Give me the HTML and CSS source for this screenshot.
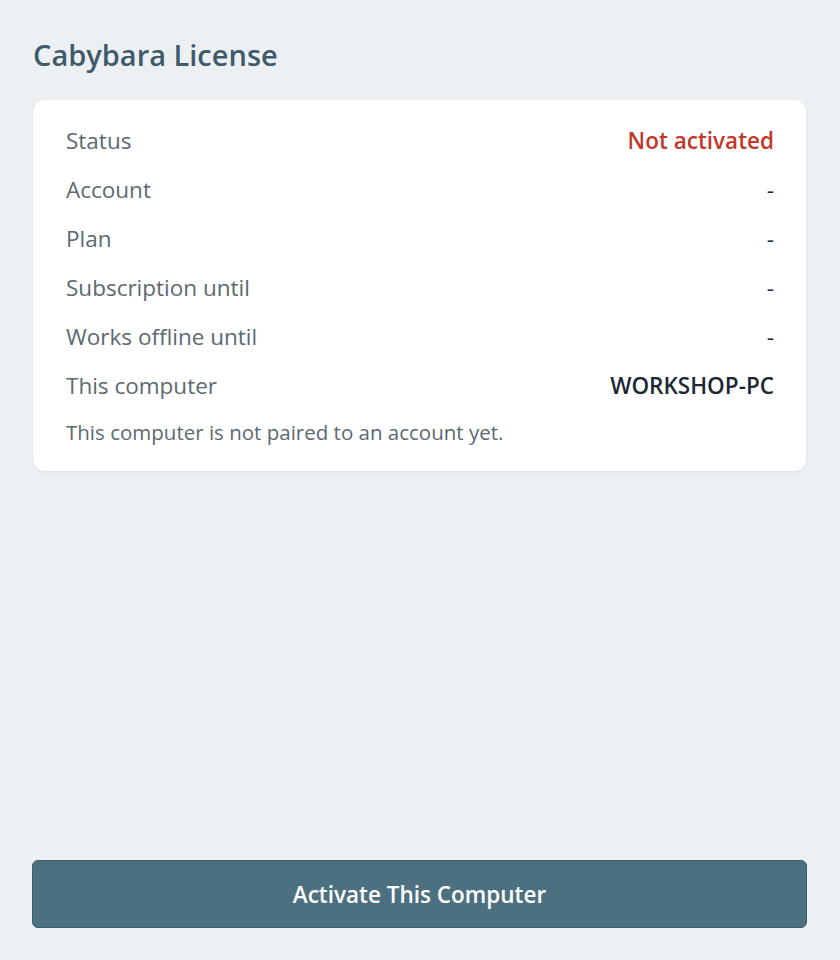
FILE: index.html
```html
<!DOCTYPE html>
<html lang="en">
<head>
<meta charset="utf-8">
<title>Cabybara License</title>
<link rel="stylesheet" href="styles.css">
</head>
<body>
<main class="page">
  <h1 class="title">Cabybara License</h1>
  <section class="card">
    <div class="row"><span class="label">Status</span><span class="value value-bad">Not activated</span></div>
    <div class="row"><span class="label">Account</span><span class="value">-</span></div>
    <div class="row"><span class="label">Plan</span><span class="value">-</span></div>
    <div class="row"><span class="label">Subscription until</span><span class="value">-</span></div>
    <div class="row"><span class="label">Works offline until</span><span class="value">-</span></div>
    <div class="row"><span class="label">This computer</span><span class="value value-strong">WORKSHOP-PC</span></div>
    <p class="note">This computer is not paired to an account yet.</p>
  </section>
  <div class="spacer"></div>
  <button class="primary" type="button">Activate This Computer</button>
</main>
</body>
</html>
```
FILE: styles.css
```css
html, body {
  margin: 0;
  padding: 0;
  height: 100%;
}
body {
  background: #edf0f3;
  font-family: "Open Sans", "Noto Sans", sans-serif;
}
.page {
  box-sizing: border-box;
  min-height: 100vh;
  display: flex;
  flex-direction: column;
  padding: 35px 33px 32px 32px;
}
.title {
  margin: 0 0 25px 1px;
  font-size: 29px;
  font-weight: 600;
  color: #3e5b6b;
  line-height: 40px;
}
.card {
  margin: 0 1px 0 1px;
  background: #ffffff;
  border-radius: 12px;
  box-shadow: 0 1px 3px rgba(30, 50, 70, 0.10);
  padding: 16px 32px 24px 33px;
  display: flex;
  flex-direction: column;
}
.row {
  display: flex;
  justify-content: space-between;
  align-items: center;
  height: 49px;
}
.label {
  font-size: 22.5px;
  color: #5b6971;
}
.value {
  font-size: 22.5px;
  color: #1c2833;
}
.value-bad {
  color: #c0392b;
  font-weight: 600;
}
.value-strong {
  font-weight: 600;
}
.note {
  margin: 7px 0 0 0;
  font-size: 20.5px;
  color: #5b6971;
  line-height: 30px;
}
.spacer {
  flex: 1;
}
.primary {
  height: 68px;
  width: 100%;
  background: #4d7080;
  border: 1px solid #3d5d6b;
  border-radius: 6px;
  color: #ffffff;
  font-family: inherit;
  font-size: 22.5px;
  font-weight: 600;
  cursor: pointer;
}
```
